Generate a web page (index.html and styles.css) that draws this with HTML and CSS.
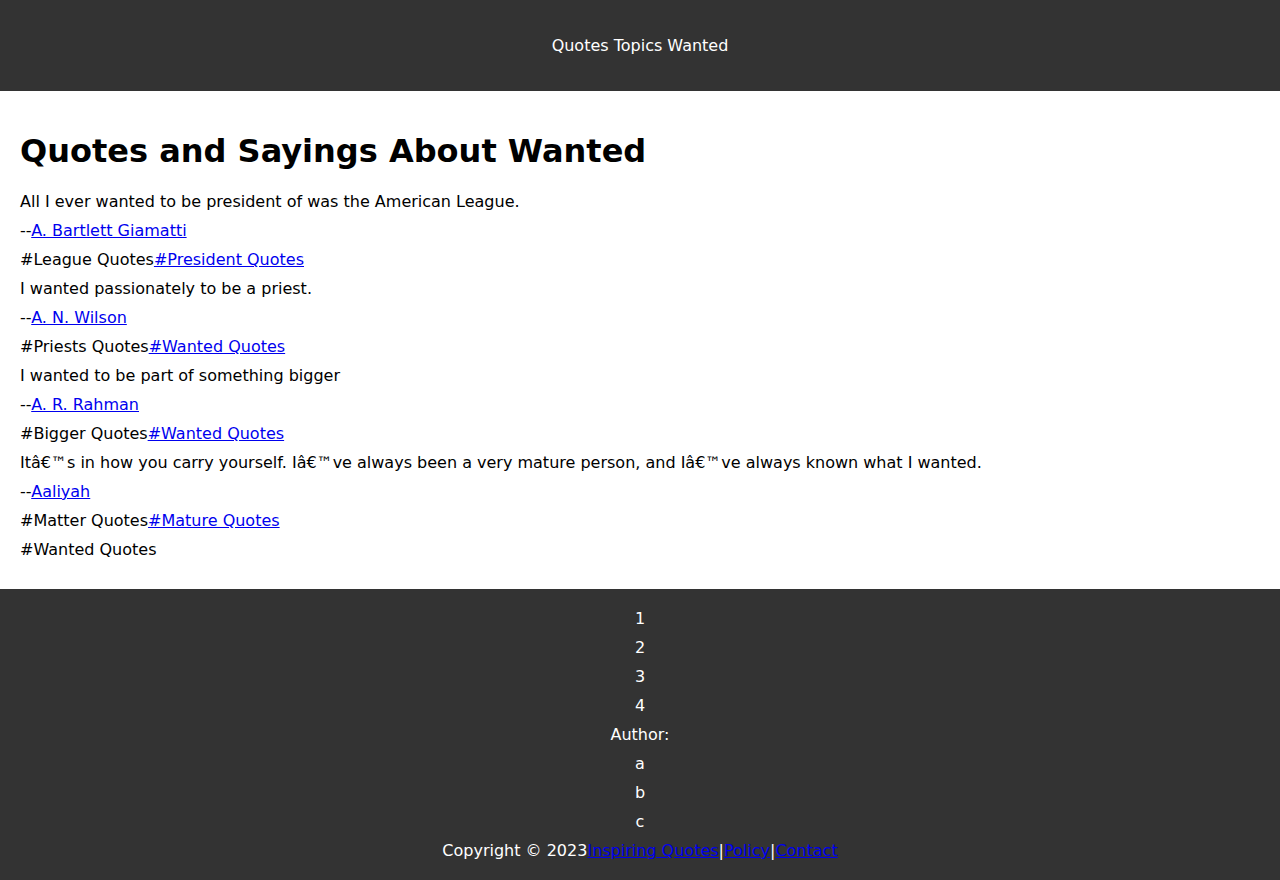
FILE: index.html
```html
<!DOCTYPE html>
<html lang="en">
<head>
<meta charset="utf-8">
<title>Quotes and Sayings About Wanted</title>
<link rel="stylesheet" href="styles.css">
</head>
<body>
<header class="site-header">
  <div class="site-title">Quotes Topics Wanted</div>
</header>
<main class="content">
  <h1 class="page-title">Quotes and Sayings About Wanted</h1>
  <div class="quote">
    <div class="row">All I ever wanted to be president of was the American League.</div>
    <div class="row">--<a href="#">A. Bartlett Giamatti</a></div>
    <div class="row">#League Quotes<a href="#">#President Quotes</a></div>
  </div>
  <div class="quote">
    <div class="row">I wanted passionately to be a priest.</div>
    <div class="row">--<a href="#">A. N. Wilson</a></div>
    <div class="row">#Priests Quotes<a href="#">#Wanted Quotes</a></div>
  </div>
  <div class="quote">
    <div class="row">I wanted to be part of something bigger</div>
    <div class="row">--<a href="#">A. R. Rahman</a></div>
    <div class="row">#Bigger Quotes<a href="#">#Wanted Quotes</a></div>
  </div>
  <div class="quote">
    <div class="row">Itâ€™s in how you carry yourself. Iâ€™ve always been a very mature person, and Iâ€™ve always known what I wanted.</div>
    <div class="row">--<a href="#">Aaliyah</a></div>
    <div class="row">#Matter Quotes<a href="#">#Mature Quotes</a></div>
  </div>
  <div class="row">#Wanted Quotes</div>
</main>
<footer class="site-footer">
  <div class="row">1</div>
  <div class="row">2</div>
  <div class="row">3</div>
  <div class="row">4</div>
  <div class="row">Author:</div>
  <div class="row">a</div>
  <div class="row">b</div>
  <div class="row">c</div>
  <div class="row">Copyright © 2023<a href="#">Inspiring Quotes</a>|<a href="#">Policy</a>|<a href="#">Contact</a></div>
</footer>
</body>
</html>
```
FILE: styles.css
```css
html, body {
  margin: 0;
  padding: 0;
}
body {
  font-family: "DejaVu Sans", sans-serif;
  font-size: 16px;
  color: #000;
  background: #fff;
}
a {
  color: #0000ee;
  text-decoration: underline;
}
.site-header {
  background: #333333;
  color: #ffffff;
  text-align: center;
  padding: 36px 20px;
}
.site-title {
  line-height: 19px;
}
.content {
  padding: 42px 20px 25px;
}
.page-title {
  font-size: 32px;
  font-weight: bold;
  line-height: 37px;
  margin: 0 0 17px;
}
.row {
  line-height: 29px;
}
.site-footer {
  background: #333333;
  color: #ffffff;
  text-align: center;
  padding: 15px 20px 15px;
}
```
